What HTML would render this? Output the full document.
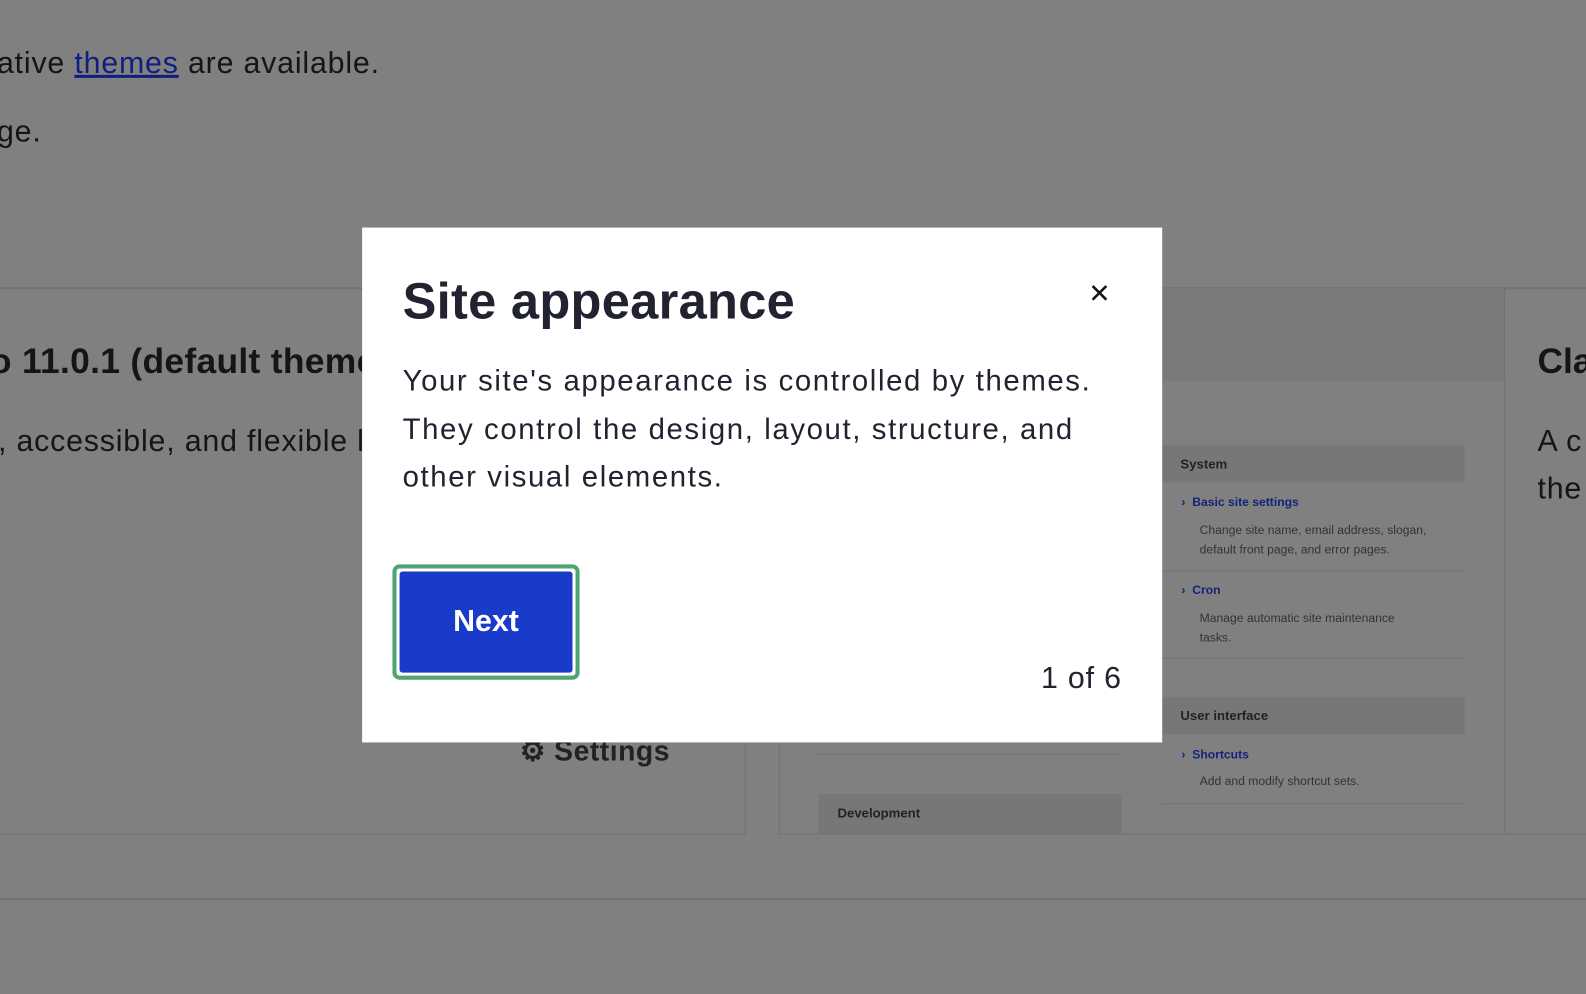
<!DOCTYPE html>
<html><head><meta charset="utf-8"><style>
*{margin:0;padding:0;box-sizing:border-box}
body{width:1586px;height:994px;overflow:hidden;background:#808080;font-family:"Liberation Sans",sans-serif;color:#151515}
#w{position:absolute;left:0;top:0;width:1568px;height:983px;transform:scale(1.0115);transform-origin:0 0}
.a{position:absolute;white-space:nowrap}
.hl{position:absolute;left:0;width:1586px;height:2px;background:#727272}
.modal{position:absolute;left:358px;top:225px;width:791px;height:509px;background:#fff}
</style></head><body><div id="w">
<div class="a" style="left:-3px;top:46px;font-size:30px;letter-spacing:0.8px">ative <span style="color:#0f1f80;text-decoration:underline">themes</span> are available.</div>
<div class="a" style="left:-3px;top:114px;font-size:30px;letter-spacing:0.8px">ge.</div>
<div class="hl" style="top:284px"></div>
<div style="position:absolute;left:-2px;top:285px;width:739px;height:540px;border:1px solid #727272;border-top:none"></div>
<div class="a" style="left:-10px;top:338px;font-size:35px;font-weight:bold;letter-spacing:0.3px">o 11.0.1 (default theme)</div>
<div class="a" style="left:-2px;top:420px;font-size:30px;letter-spacing:0.8px">, accessible, and flexible l</div>
<div class="a" style="left:514px;top:726px;font-size:28px;font-weight:bold;color:#222;letter-spacing:0.5px">⚙ Settings</div>
<div style="position:absolute;left:770px;top:285px;width:830px;height:540px;border:1px solid #727272;border-top:none"></div>
<div style="position:absolute;left:1148px;top:285px;width:339px;height:92px;background:#7a7a7a"></div>
<div style="position:absolute;left:1487px;top:285px;width:1px;height:540px;background:#727272"></div>
<div class="a" style="left:1520px;top:338px;font-size:35px;font-weight:bold">Cla</div>
<div class="a" style="left:1520px;top:420px;font-size:30px;letter-spacing:0.8px">A c</div>
<div class="a" style="left:1520px;top:467px;font-size:30px;letter-spacing:0.8px">the</div>
<div style="position:absolute;left:1148px;top:440px;width:300px;height:37px;background:#777"></div>
<div class="a" style="left:1167px;top:451px;font-size:13px;font-weight:bold;color:#222">System</div>
<div class="a" style="left:1168px;top:489px;font-size:12px;font-weight:bold;color:#14237a">›&nbsp; Basic site settings</div>
<div class="a" style="left:1186px;top:515px;font-size:12px;color:#333;line-height:19px">Change site name, email address, slogan,<br>default front page, and error pages.</div>
<div style="position:absolute;left:1148px;top:564px;width:300px;height:1px;background:#727272"></div>
<div class="a" style="left:1168px;top:576px;font-size:12px;font-weight:bold;color:#14237a">›&nbsp; Cron</div>
<div class="a" style="left:1186px;top:602px;font-size:12px;color:#333;line-height:19px">Manage automatic site maintenance<br>tasks.</div>
<div style="position:absolute;left:1148px;top:650px;width:300px;height:1px;background:#727272"></div>
<div style="position:absolute;left:1148px;top:689px;width:300px;height:37px;background:#777"></div>
<div class="a" style="left:1167px;top:700px;font-size:13px;font-weight:bold;color:#222">User interface</div>
<div class="a" style="left:1168px;top:739px;font-size:12px;font-weight:bold;color:#14237a">›&nbsp; Shortcuts</div>
<div class="a" style="left:1186px;top:765px;font-size:12px;color:#333">Add and modify shortcut sets.</div>
<div style="position:absolute;left:1148px;top:794px;width:300px;height:1px;background:#727272"></div>
<div style="position:absolute;left:809px;top:745px;width:300px;height:1px;background:#727272"></div>
<div style="position:absolute;left:809px;top:785px;width:300px;height:39px;background:#777"></div>
<div class="a" style="left:828px;top:796px;font-size:13px;font-weight:bold;color:#222">Development</div>
<div class="hl" style="top:888px"></div>
<div class="modal">
<div class="a" style="left:40px;top:44px;font-size:50px;font-weight:bold;color:#222330;letter-spacing:0.3px">Site appearance</div>
<div class="a" style="left:718px;top:50px;font-size:26px;color:#111">✕</div>
<div style="position:absolute;left:40px;top:129px;font-size:29px;line-height:47.5px;color:#222330;white-space:nowrap;letter-spacing:1.6px">Your site's appearance is controlled by themes.<br>They control the design, layout, structure, and<br>other visual elements.</div>
<div style="position:absolute;left:30px;top:333px;width:185px;height:114px;border:4px solid #4fa471;border-radius:7px;background:#fff;padding:3px">
<div style="width:100%;height:100%;background:#1a3bc9;border-radius:3px;color:#fff;font-weight:bold;font-size:30px;display:flex;align-items:center;justify-content:center">Next</div></div>
<div class="a" style="right:40px;top:429px;font-size:30px;color:#222330;letter-spacing:0.8px">1 of 6</div>
</div>
</div></body></html>
